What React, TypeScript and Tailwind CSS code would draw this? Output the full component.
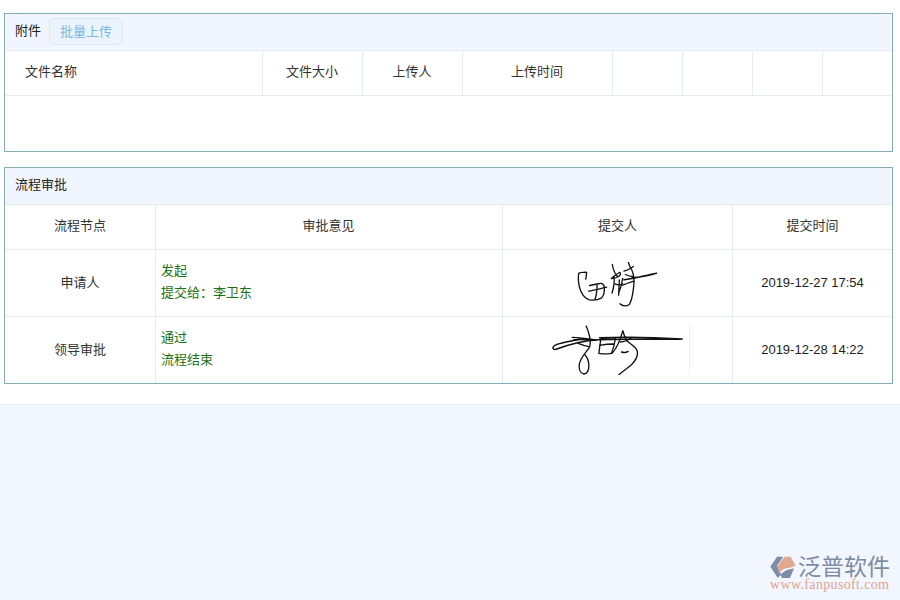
const font = "[font-family:'Liberation_Sans','Noto_Sans_CJK_SC',sans-serif]"

const fileColumns = [
  { label: '文件名称', className: 'w-[258px] justify-start pl-5' },
  { label: '文件大小', className: 'w-[100px] justify-center pr-[1px]' },
  { label: '上传人', className: 'w-[100px] justify-center pr-[1px]' },
  { label: '上传时间', className: 'w-[150px] justify-center pr-[1px]' },
  { label: '', className: 'w-[70px] justify-center' },
  { label: '', className: 'w-[70px] justify-center' },
  { label: '', className: 'w-[70px] justify-center' },
  { label: '', className: 'flex-1 justify-center' },
]

// signature paths are traced at 3x, hence the viewBox sizes
function SignatureOne() {
  return (
    <svg width="85" height="47" viewBox="225 35 255 140" fill="none" stroke="#111" strokeWidth="4" strokeLinecap="round" strokeLinejoin="round" className="mt-[4px]">
      <path d="M260 66c-1 6-1 14-3 20M258 65c-8 0-18 0-22 4-2 14 0 36 6 52 6 14 14 24 26 27 12 2 26 0 36-5 8-8 10-22 9-34-2-8-8-12-14-10-10 2-20 4-30 6" />
      <path d="M266 122c16-3 36-8 54-12M291 103c0 14-1 30-6 44" />
      <path d="M337 42c2 12 6 24 12 32 4 6 10 4 12-2 1-3 0-6-3-6-8 4-16 12-24 18 8 0 16-2 22-6" />
      <path d="M342 78c2 14 0 30-6 50M358 88c0 14-2 32-2 46M368 84c-2 14-6 30-12 44M346 100c6 4 14 4 22 0" />
      <path d="M384 30c2 12 6 20 12 30 6 12 8 30 4 56-2 18-6 36-12 46-8 6-20 6-28-2" />
      <path d="M372 88c30-4 66-14 98-20-20 8-50 12-74 14" strokeWidth="4.5" />
      <path d="M372 62c10-2 20-8 28-14M368 104c10-4 24-10 34-12M376 72c8 4 16 6 24 6" />
    </svg>
  )
}

function SignatureTwo() {
  return (
    <svg width="132" height="50" viewBox="155 225 395 150" fill="none" stroke="#111" strokeWidth="4" strokeLinecap="round" strokeLinejoin="round">
      <path d="M300 263c80-3 170-1 248 4-70 3-170-2-250 2-50 3-90 14-126 28-8 3-14 0-11-6 4-8 24-12 80-24" strokeWidth="4.5" />
      <path d="M218 262c24 0 48 4 72 8M236 280c10 4 22 8 32 10M222 270c14-2 30-2 46 0" />
      <path d="M260 228c6 14 12 30 12 48 1 10-2 18-8 24-10 12-22 26-25 44-1 14 4 26 14 28 10 0 16-12 15-28-1-14-6-24-12-30" />
      <path d="M304 266c-2 14-4 30-6 44 12 2 28 2 38 0 6-16 10-32 12-46-14-2-30 0-44 2M300 286c12-2 28-4 42-4" />
      <path d="M338 310c14-16 24-38 32-68 2 10 6 20 12 30 10 10 24 16 30 28 6 16-2 30-16 44-12 10-26 20-38 30" />
      <path d="M362 276c14 0 26-6 36-14M366 306c6 2 14 2 20-2" />
    </svg>
  )
}

function LogoMark() {
  return (
    <svg width="26" height="23" viewBox="30 33 75 68" className="shrink-0">
      <path d="M50 35h18L50 62l12 26-10 10-22-33z" fill="#7d8da8" />
      <path d="M72 35h18l15 27-17 6c-18 0-28 10-33 17l-3-23z" fill="#e0a88f" />
      <path d="M60 90c10-15 25-18 40-20L88 98H65z" fill="#7d8da8" />
    </svg>
  )
}

function PanelHeader({ title, children }: { title: string; children?: React.ReactNode }) {
  return (
    <div className="flex h-[37px] items-center gap-[8px] border-b border-[#e8ecf0] bg-[#f1f6fe] pb-[1px] pl-[10px] text-[13px] text-[#222]">
      <span className="-mt-[1px]">{title}</span>
      {children}
    </div>
  )
}

function Opinion({ lines }: { lines: string[] }) {
  return (
    <div className="flex h-full w-[347px] flex-col justify-center gap-[4px] border-r border-[#e8ecf0] pb-[2px] pl-[5px] text-[13px] leading-[18px] text-[#1a7012]">
      {lines.map((line) => (
        <div key={line}>{line}</div>
      ))}
    </div>
  )
}

function ApprovalRow({
  node,
  lines,
  signature,
  time,
  last,
}: {
  node: string
  lines: string[]
  signature: React.ReactNode
  time: string
  last?: boolean
}) {
  return (
    <div className={`flex text-[13px] text-[#333] ${last ? 'h-[66px]' : 'h-[67px] border-b border-[#e8ecf0]'}`}>
      <div className={`flex w-[151px] items-center justify-center border-r border-[#e8ecf0] ${last ? 'pb-[1px]' : ''}`}>{node}</div>
      <Opinion lines={lines} />
      <div className="flex w-[230px] items-center justify-center border-r border-[#e8ecf0]">{signature}</div>
      <div className="flex flex-1 items-center justify-center text-[#222]">{time}</div>
    </div>
  )
}

export default function App() {
  return (
    <div className={`relative h-[600px] w-[900px] overflow-hidden bg-[#f2f6fe] ${font}`}>
      <div className="h-[405px] border-b border-[#e8ecf0] bg-white px-[4px] pt-[13px]">
        {/* Attachments */}
        <div className="h-[139px] w-[889px] border border-[#84adb3] bg-white">
          <PanelHeader title="附件">
            <button className="flex h-[27px] w-[74px] items-center justify-center rounded-[5px] border border-[#dce9f6] bg-[#ebf4fd] text-[13px] text-[#7ab8e2]">
              批量上传
            </button>
          </PanelHeader>
          <div className="flex h-[45px] border-b border-[#e8ecf0] text-[13px] text-[#333]">
            {fileColumns.map((col, i) => (
              <div
                key={i}
                className={`flex items-center pb-[2px] ${col.className} ${i < fileColumns.length - 1 ? 'border-r border-[#e8ecf0]' : ''}`}
              >
                {col.label}
              </div>
            ))}
          </div>
        </div>

        {/* Approval flow */}
        <div className="mt-[15px] h-[217px] w-[889px] border border-[#84adb3] bg-white">
          <PanelHeader title="流程审批" />
          <div className="flex h-[45px] border-b border-[#e8ecf0] text-[13px] text-[#333]">
            <div className="flex w-[151px] items-center justify-center border-r border-[#e8ecf0] pb-[2px]">流程节点</div>
            <div className="flex w-[347px] items-center justify-center border-r border-[#e8ecf0] pb-[2px] pr-[1px]">审批意见</div>
            <div className="flex w-[230px] items-center justify-center border-r border-[#e8ecf0] pb-[2px]">提交人</div>
            <div className="flex flex-1 items-center justify-center pb-[2px]">提交时间</div>
          </div>
          <ApprovalRow
            node="申请人"
            lines={['发起', '提交给：李卫东']}
            signature={<SignatureOne />}
            time="2019-12-27 17:54"
          />
          <ApprovalRow
            node="领导审批"
            lines={['通过', '流程结束']}
            signature={
              <div className="flex w-full justify-start">
                <div className="flex h-[50px] w-[187px] items-center justify-end border-r border-[#f0f0f0] pr-[6px]">
                  <SignatureTwo />
                </div>
              </div>
            }
            time="2019-12-28 14:22"
            last
          />
        </div>
      </div>

      {/* Watermark */}
      <div className="absolute right-[11px] top-[556px] flex w-[119px] flex-col">
        <div className="flex items-center gap-[2px]">
          <LogoMark />
          <span className="whitespace-nowrap text-[23px] leading-[23px] text-[#7d8ca5]">泛普软件</span>
        </div>
        <span className="whitespace-nowrap font-['Liberation_Serif'] text-[14px] leading-[11px] tracking-[0.35px] text-[#dfa58e]">
          www.fanpusoft.com
        </span>
      </div>
    </div>
  )
}
